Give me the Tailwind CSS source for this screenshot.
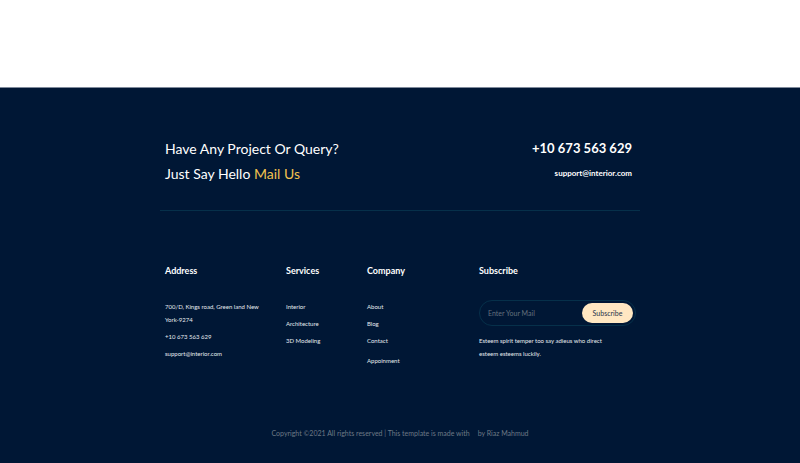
<!DOCTYPE html>
<html lang="en">
<head>
<meta charset="utf-8">
<meta name="viewport" content="width=device-width, initial-scale=1">
<title>Interior</title>
<script src="https://cdn.jsdelivr.net/npm/@tailwindcss/browser@4"></script>
</head>
<body class="flex min-h-screen flex-col bg-white pt-[87px] font-[Lato,sans-serif]">
<footer class="grow border-t border-[#7f8a9b] bg-[#001735] text-[#e6ebef]">
  <div class="mx-auto w-3/5">
    <section class="flex items-start justify-between border-b border-[#06304a] pr-2 pl-[5px] pt-12 pb-6 text-white">
      <h2 class="text-[14px] leading-[25px]">Have Any Project Or Query?<br>Just Say Hello <a href="#" class="text-[#f3c24f]">Mail Us</a></h2>
      <address class="flex flex-col text-right not-italic">
        <a href="#" class="text-[13px] leading-[25px] font-bold">+10 673 563 629</a>
        <a href="#" class="text-[8px] leading-[25px] font-bold">support@interior.com</a>
      </address>
    </section>
    <div class="grid grid-cols-[121fr_81fr_112fr_157fr] pr-1 pl-[5px] pt-[53px] text-[6px] leading-[13px]">
      <section class="pr-5">
        <h3 class="mb-[22px] text-[9px] leading-[14px] font-bold text-white">Address</h3>
        <address class="flex flex-col gap-1 not-italic">
          <p>700/D, Kings road, Green land New York-9274</p>
          <a href="#">+10 673 563 629</a>
          <a href="#">support@interior.com</a>
        </address>
      </section>
      <nav aria-label="Services">
        <h3 class="mb-[22px] text-[9px] leading-[14px] font-bold text-white">Services</h3>
        <ul class="flex flex-col gap-1">
          <li><a href="#">Interior</a></li>
          <li><a href="#">Architecture</a></li>
          <li><a href="#">3D Modeling</a></li>
        </ul>
      </nav>
      <nav aria-label="Company">
        <h3 class="mb-[22px] text-[9px] leading-[14px] font-bold text-white">Company</h3>
        <ul class="flex flex-col gap-1">
          <li><a href="#">About</a></li>
          <li><a href="#">Blog</a></li>
          <li><a href="#">Contact</a></li>
          <li class="pt-[3px]"><a href="#">Appoinment</a></li>
        </ul>
      </nav>
      <section>
        <h3 class="mb-[22px] text-[9px] leading-[14px] font-bold text-white">Subscribe</h3>
        <form class="mb-2 flex h-[26px] items-center rounded-full border border-[#06304a] pr-[2px] pl-2 text-[7px]">
          <input type="email" aria-label="Enter Your Mail" placeholder="Enter Your Mail" class="min-w-0 grow bg-transparent outline-none placeholder:text-[#64717d]">
          <button type="button" class="h-5 w-[51px] shrink-0 rounded-full bg-[#ffe7c2] text-[#25334a]">Subscribe</button>
        </form>
        <p class="pr-6">Esteem spirit temper too say adieus who direct esteem esteems luckily.</p>
      </section>
    </div>
    <p class="flex justify-center gap-2 pt-[60px] text-[7px] leading-[13px] text-[#6d7985]"><span>Copyright ©2021 All rights reserved | This template is made with</span><span>by Riaz Mahmud</span></p>
  </div>
</footer>
</body>
</html>
